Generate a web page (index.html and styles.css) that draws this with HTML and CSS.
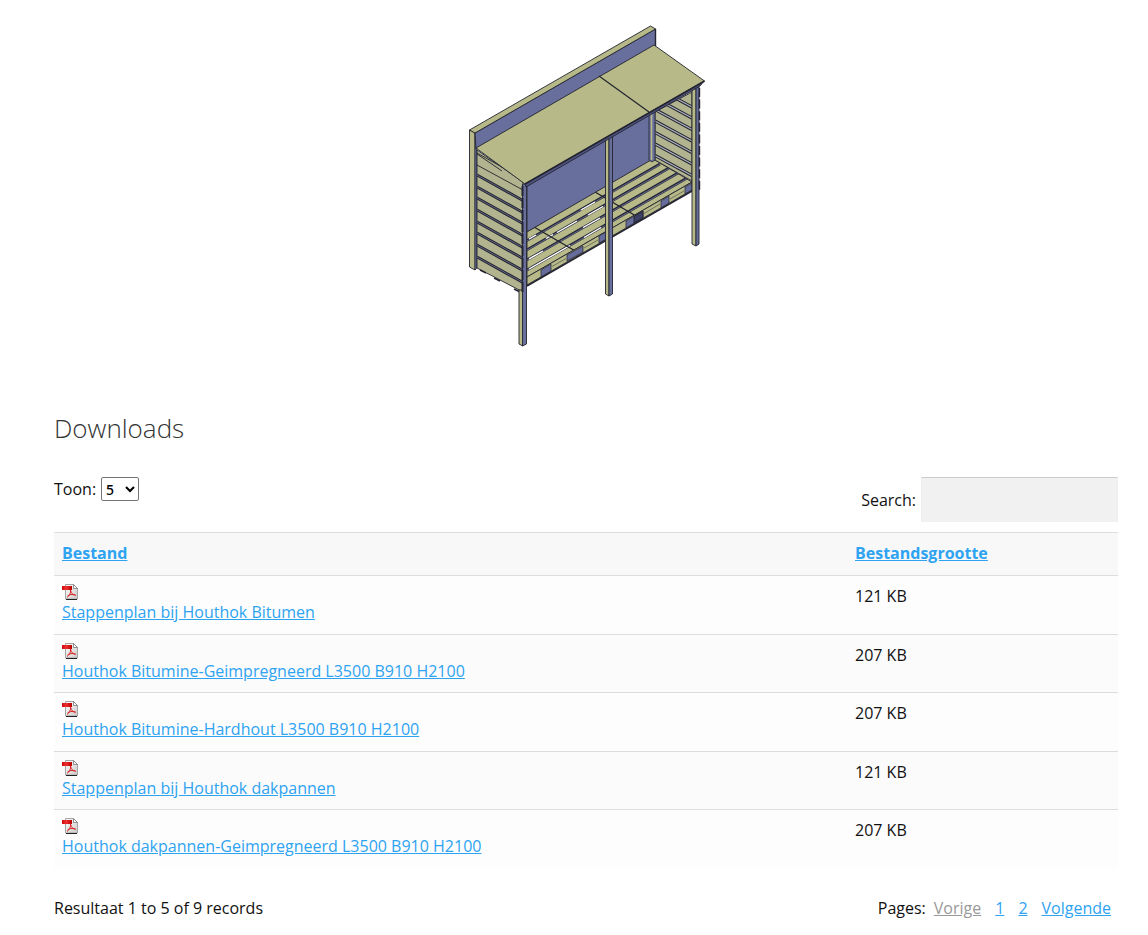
FILE: index.html
```html
<!DOCTYPE html>
<html lang="nl">
<head>
<meta charset="utf-8">
<meta name="viewport" content="width=device-width, initial-scale=1">
<title>Downloads</title>
<link rel="stylesheet" href="styles.css">
</head>
<body>
<svg class="sprite" aria-hidden="true">
  <defs>
    <linearGradient id="paper" x1="0" y1="0" x2="1" y2="1"><stop offset="0" stop-color="#fff"/><stop offset="1" stop-color="#c9c9c9"/></linearGradient>
    <linearGradient id="band" x1="0" y1="0" x2="1" y2="0"><stop offset="0" stop-color="#c80a0a"/><stop offset=".4" stop-color="#f03030"/><stop offset="1" stop-color="#b80000"/></linearGradient>
  </defs>
  <symbol id="pdf" viewBox="0 0 16 16">
    <path d="M3.5.5h8l4 4v10.5h-12z" fill="url(#paper)" stroke="#a4a4a4"/>
    <path d="M11.5.5v4h4z" fill="#fff" stroke="#777" stroke-width=".8"/>
    <path d="M4 15.5h11" stroke="#222"/>
    <path d="M0 2h10v4H0z" fill="url(#band)"/>
    <path d="M8.500 6c.6 3-1.300 6-3.500 7.500M8.700 6.500c.3 2.500 2 4.500 5 4.800M5.500 12c2-1.500 4-2 8-1" fill="none" stroke="#dc2323" stroke-width="1"/>
  </symbol>
</svg>
<main class="page">
  <svg class="drawing" viewBox="456 16 260 340" role="img" aria-label="Houthok">
    <defs>
      <clipPath id="left"><path d="M477 150L523 182V292L477 268z"/></clipPath>
      <clipPath id="right"><path d="M655 112L692 92V181L655 160z"/></clipPath>
      <clipPath id="floor"><path d="M527 232L651 160H655L692 182L527 277z"/></clipPath>
      <path id="slat" d="M477 0L523 25.500"/>
    </defs>
    <g stroke="#23242f" stroke-width=".9" stroke-linejoin="round">
      <path d="M527 180L655 106V160L527 232z" fill="#696f9d"/>
      <path d="M527 232L651 160H655L692 182L527 277z" fill="#b7ba88"/>
      <g clip-path="url(#floor)">
        <g stroke="#252738" stroke-width="2.600">
          <path d="M660 164L520 244.500M669 168L520 253.700M678 173L520 263.900M687 178L520 274"/>
        </g>
        <g stroke="#777ba0" stroke-width=".8">
          <path d="M660 164.500L520 245M669 168.500L520 254.200M678 173.500L520 264.400M687 178.500L520 274.500"/>
        </g>
        <g stroke="#fff" stroke-width="1.400">
          <path d="M529 239L536 235M581 210L595 202M546 238.500L553 234.500M557 232.500L577 221M588 215L603 206.500M529 258.800L543 251M583 227.500L600 218M529 269L570 245.500M584 237.500L601 227.500"/>
        </g>
        <path d="M595 192L636 216M534 227L577 252" stroke-width="1.400"/>
      </g>
      <path d="M527 277L692 182V190L527 285z" fill="#b7ba88"/>
      <path d="M541 270L551 264V271L541 277zM567 255L583 246V252L567 261zM599 236L608 231V238L599 243zM626 221L643 211V218L626 228zM661 201L669 196V203L661 208zM685 187L692 183V190L685 194z" fill="#666c9c" stroke-width=".7"/>
      <path d="M634 216.500L643 211V218L634 223z" fill="#3b3f66"/>
      <path d="M527 286L692 191" stroke-width="1.500"/>
      <path d="M552 266.500L566 258.500M584 248L598 240M644 213.500L660 204M670 199L684 191" stroke="#666a55"/>

      <path d="M655 112L692 92V181L655 160z" fill="#b1b48e"/>
      <g clip-path="url(#right)" fill="none">
        <path d="M655 87L692 107M655 98L692 118M655 109.500L692 129.500M655 121L692 141M655 132.500L692 152.500M655 144L692 164M655 155.500L692 175.500" stroke-width="3.200"/>
        <path d="M655 87L692 107M655 98L692 118M655 109.500L692 129.500M655 121L692 141M655 132.500L692 152.500M655 144L692 164M655 155.500L692 175.500" stroke="#a9acba" stroke-width="1.200"/>
      </g>
      <path d="M649 110H655V160L652 162L649 160z" fill="#696f9d" stroke-width=".8"/>
      <path d="M651.500 112V160" stroke="#b7ba88" stroke-width="1.600"/>

      <path d="M469.500 130L475 133V270L469.500 267z" fill="#b7ba88"/>
      <path d="M475 133H477V268L475 270z" fill="#696f9d" stroke-width=".7"/>
      <path d="M475 133L655.500 29V46L476 149z" fill="#696f9d"/>
      <path d="M469.500 130L650.500 26L655.500 29L475 133z" fill="#b7ba88"/>
      <path d="M655.500 29V46" stroke-width="1.400"/>

      <path d="M477 150L523 182V292L477 268z" fill="#b1b48e"/>
      <g clip-path="url(#left)" fill="none">
        <path d="M477 165L523 190M477 153L523 179M477 154L502 171" />
        <g stroke-width="2.800">
          <use href="#slat" y="175"/><use href="#slat" y="187"/><use href="#slat" y="198"/><use href="#slat" y="210"/><use href="#slat" y="222"/><use href="#slat" y="233"/><use href="#slat" y="245"/><use href="#slat" y="257"/>
        </g>
        <g stroke="#7b80a8" stroke-width=".7">
          <use href="#slat" y="175"/><use href="#slat" y="187"/><use href="#slat" y="198"/><use href="#slat" y="210"/><use href="#slat" y="222"/><use href="#slat" y="233"/><use href="#slat" y="245"/><use href="#slat" y="257"/>
        </g>
      </g>
      <path d="M480 270L486 273M494 278L500 281M514 289L520 292" stroke-width="1.400"/>

      <path d="M519 290H523V346L519 344z" fill="#b7ba88"/>
      <path d="M522.500 184H526.500V344L522.500 346z" fill="#696f9d"/>
      <path d="M522.500 186V292" stroke-width="2" stroke-dasharray="10 2"/>

      <path d="M605.500 138H609V296L605.500 294z" fill="#b7ba88"/>
      <path d="M609 136H612.500V294L609 296z" fill="#696f9d"/>

      <path d="M692 88H696V246L692 244z" fill="#b7ba88"/>
      <path d="M696 86H699V244L696 246z" fill="#696f9d"/>
      <path d="M699.500 88V191" stroke-width="1.400" stroke-dasharray="9 2.600"/>

      <path d="M525 184L704 81L700 86L526 187z" fill="#4f5482"/>
      <path d="M476 148L654 45L704.500 81L525 184z" fill="#b7ba88"/>
      <path d="M525 184L704.500 81" stroke-width="1.500"/>
      <path d="M599 76L649 112" stroke-width="1.200"/>
    </g>
  </svg>

  <h2 class="title">Downloads</h2>

  <div class="toolbar">
    <div class="field">
      <label for="count">Toon:</label>
      <select id="count" class="count"><option>5</option><option>10</option></select>
    </div>
    <div class="field field-search">
      <label for="search">Search:</label>
      <input id="search" class="search" type="text">
    </div>
  </div>

  <table class="files">
    <thead>
      <tr><th class="col-name"><a href="#">Bestand</a></th><th><a href="#">Bestandsgrootte</a></th></tr>
    </thead>
    <tbody>
      <tr><td><svg class="icon"><use href="#pdf"/></svg><a href="#">Stappenplan bij Houthok Bitumen</a></td><td>121 KB</td></tr>
      <tr><td><svg class="icon"><use href="#pdf"/></svg><a href="#">Houthok Bitumine-Geimpregneerd L3500 B910 H2100</a></td><td>207 KB</td></tr>
      <tr><td><svg class="icon"><use href="#pdf"/></svg><a href="#">Houthok Bitumine-Hardhout L3500 B910 H2100</a></td><td>207 KB</td></tr>
      <tr><td><svg class="icon"><use href="#pdf"/></svg><a href="#">Stappenplan bij Houthok dakpannen</a></td><td>121 KB</td></tr>
      <tr><td><svg class="icon"><use href="#pdf"/></svg><a href="#">Houthok dakpannen-Geimpregneerd L3500 B910 H2100</a></td><td>207 KB</td></tr>
    </tbody>
  </table>

  <div class="footer">
    <span>Resultaat 1 to 5 of 9 records</span>
    <nav class="pages">
      <span class="pages-label">Pages:</span>
      <a class="off" href="#">Vorige</a>
      <a href="#">1</a>
      <a href="#">2</a>
      <a href="#">Volgende</a>
    </nav>
  </div>
</main>
</body>
</html>
```
FILE: styles.css
```css
* { box-sizing: border-box; }

body {
  margin: 0;
  background: #fff;
  color: #111;
  font: 400 16px/24px "Open Sans", "Noto Sans", sans-serif;
}

a { color: #2ea3f2; }

.sprite { position: absolute; width: 0; height: 0; }

.page { padding: 16px 30px 0 54px; }

.drawing {
  display: block;
  width: 260px;
  max-width: 100%;
  margin: 0 auto;
}

.title {
  margin: 56px 0 32px;
  font-size: 26px;
  font-weight: 300;
  line-height: 33px;
  color: #333;
}

.toolbar {
  display: flex;
  justify-content: space-between;
  align-items: flex-start;
  margin-bottom: 10px;
}

.field { display: flex; align-items: center; gap: 5px; }

.count {
  width: 38px;
  height: 24px;
  padding: 0;
  border: 1px solid #767676;
  border-radius: 2px;
  background: #fff;
  color: #000;
  font: 500 14px "Noto Sans", sans-serif;
}

.search {
  width: 197px;
  height: 45px;
  padding: 0 12px;
  border: 1px solid #eee;
  border-top-color: #ccc;
  border-bottom: 0;
  background: #f1f1f1;
  font: inherit;
}

.files {
  width: 100%;
  border-collapse: separate;
  border-spacing: 0;
}

.files th,
.files td {
  padding: 8px;
  border-top: 1px solid #ddd;
  text-align: left;
  vertical-align: top;
}

.files th {
  height: 43px;
  background: #f8f8f8;
  font-weight: 700;
}

.col-name { width: 793px; }

.files td { height: 59px; padding-bottom: 0; background: #fdfdfd; }
.files tr:nth-child(even) td { height: 58px; background: #fbfbfb; }

.files td a { display: block; }

.icon { display: block; width: 16px; height: 16px; }

.footer {
  display: flex;
  justify-content: space-between;
  margin-top: 28px;
}

.pages { display: flex; gap: 14px; padding-right: 7px; }
.pages-label { margin-right: -6px; }
.off { color: #999; }
```
